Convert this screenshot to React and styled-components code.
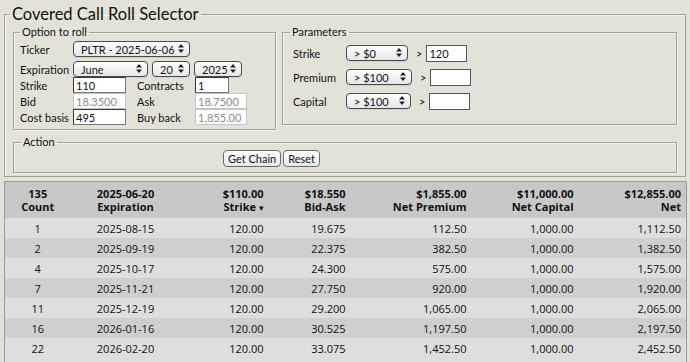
import { styled, createGlobalStyle } from "styled-components";

const GlobalStyle = createGlobalStyle`
  html, body {
    margin: 0;
    background: #e3e2d8;
  }
  body {
    font-family: Lato, "Open Sans", "Liberation Sans", sans-serif;
    color: #111;
  }
`;

const rows = [
  ["1", "2025-08-15", "120.00", "19.675", "112.50", "1,000.00", "1,112.50"],
  ["2", "2025-09-19", "120.00", "22.375", "382.50", "1,000.00", "1,382.50"],
  ["4", "2025-10-17", "120.00", "24.300", "575.00", "1,000.00", "1,575.00"],
  ["7", "2025-11-21", "120.00", "27.750", "920.00", "1,000.00", "1,920.00"],
  ["11", "2025-12-19", "120.00", "29.200", "1,065.00", "1,000.00", "2,065.00"],
  ["16", "2026-01-16", "120.00", "30.525", "1,197.50", "1,000.00", "2,197.50"],
  ["22", "2026-02-20", "120.00", "33.075", "1,452.50", "1,000.00", "2,452.50"],
];

const columns = [
  { top: "135", label: "Count", width: 66, align: "center" },
  { top: "2025-06-20", label: "Expiration", width: 110, align: "center" },
  { top: "$110.00", label: "Strike", width: 88, align: "right", sorted: true },
  { top: "$18.550", label: "Bid-Ask", width: 82, align: "right" },
  { top: "$1,855.00", label: "Net Premium", width: 121, align: "right" },
  { top: "$11,000.00", label: "Net Capital", width: 107, align: "right" },
  { top: "$12,855.00", label: "Net", width: 108, align: "right" },
];

const Arrows = () => (
  <svg width="6" height="9" viewBox="0 0 6 9">
    <path d="M3 0 L6 3.5 H0 Z M3 9 L6 5.5 H0 Z" fill="#222" />
  </svg>
);

const Select = ({ value, width }) => (
  <SelectWrap $width={width}>
    <SelectBox defaultValue={value}>
      <option>{value}</option>
    </SelectBox>
    <ArrowSlot>
      <Arrows />
    </ArrowSlot>
  </SelectWrap>
);

const App = () => {
  return (
    <Page>
      <GlobalStyle />
      <Outer>
        <OuterLegend>Covered Call Roll Selector</OuterLegend>
        <TopRow>
          <OptionSet>
            <Legend>Option to roll</Legend>
            <TickerRow>
              <Label>Ticker</Label>
              <Select value="PLTR - 2025-06-06" width={117} />
            </TickerRow>
            <FormRow>
              <Label>Expiration</Label>
              <Selects>
                <Select value="June" width={75} />
                <Select value="20" width={38} />
                <Select value="2025" width={48} />
              </Selects>
            </FormRow>
            <FormRow>
              <Label>Strike</Label>
              <Input defaultValue="110" $width={53} />
              <SubLabel>Contracts</SubLabel>
              <Input defaultValue="1" $width={34} />
            </FormRow>
            <FormRow>
              <Label>Bid</Label>
              <Input defaultValue="18.3500" $width={53} disabled />
              <SubLabel>Ask</SubLabel>
              <Input defaultValue="18.7500" $width={52} disabled />
            </FormRow>
            <FormRow>
              <Label>Cost basis</Label>
              <Input defaultValue="495" $width={53} />
              <SubLabel>Buy back</SubLabel>
              <Input defaultValue="1,855.00" $width={52} disabled />
            </FormRow>
          </OptionSet>
          <ParamSet>
            <Legend>Parameters</Legend>
            <ParamRow>
              <Label>Strike</Label>
              <Select value="> $0" width={62} />
              <Gt>&gt;</Gt>
              <ParamInput defaultValue="120" />
            </ParamRow>
            <ParamRow>
              <Label>Premium</Label>
              <Select value="> $100" width={66} />
              <Gt>&gt;</Gt>
              <ParamInput />
            </ParamRow>
            <ParamRow>
              <Label>Capital</Label>
              <Select value="> $100" width={65} />
              <Gt>&gt;</Gt>
              <ParamInput />
            </ParamRow>
          </ParamSet>
        </TopRow>
        <ActionSet>
          <Legend>Action</Legend>
          <Buttons>
            <Button>Get Chain</Button>
            <Button>Reset</Button>
          </Buttons>
        </ActionSet>
      </Outer>
      <Table>
        <colgroup>
          {columns.map((c) => (
            <col key={c.label} style={{ width: c.width }} />
          ))}
        </colgroup>
        <thead>
          <tr>
            {columns.map((c) => (
              <Th key={c.label} $align={c.align}>
                <HeadLine>{c.top}</HeadLine>
                <HeadLine>
                  {c.label}
                  {c.sorted && <Sort>▾</Sort>}
                </HeadLine>
              </Th>
            ))}
          </tr>
        </thead>
        <tbody>
          {rows.map((r, i) => (
            <Tr key={r[0]} $odd={i % 2 === 1}>
              {r.map((v, j) => (
                <Td key={j} $align={columns[j].align}>
                  {v}
                </Td>
              ))}
            </Tr>
          ))}
          <Tr>
            <Td colSpan={7} />
          </Tr>
        </tbody>
      </Table>
    </Page>
  );
};

const Page = styled.div`
  width: 690px;
  height: 362px;
  overflow: hidden;
  padding: 3px 4px 0;
  box-sizing: border-box;
`;

const Outer = styled.fieldset`
  margin: 0;
  padding: 0 8px 3px;
  border: 1px solid #a09f95;
  box-shadow: inset 1px 1px 0 #f3f2ea;
`;

const OuterLegend = styled.legend`
  font-size: 16.5px;
  line-height: 22px;
  padding: 0 2px;
  margin-left: -3px;
`;

const Legend = styled.legend`
  font-size: 11px;
  line-height: 14px;
  padding: 0 2px;
`;

const TopRow = styled.div`
  display: flex;
  align-items: flex-start;
  gap: 6px;
`;

const InnerSet = styled.fieldset`
  margin: 0;
  border: 1px solid #a3a298;
  box-shadow: inset 1px 1px 0 #f3f2ea, 1px 1px 0 #f3f2ea;
`;

const OptionSet = styled(InnerSet)`
  width: 263px;
  box-sizing: border-box;
  padding: 2px 6px 4px;
  display: flex;
  flex-direction: column;
`;

const ParamSet = styled(InnerSet)`
  flex: 1;
  padding: 5px 10px 14px 7px;
  display: flex;
  flex-direction: column;
  gap: 6px;
`;

const ActionSet = styled(InnerSet)`
  margin-top: 5px;
  padding: 1px 7px 5px;
`;

const FormRow = styled.div`
  display: flex;
  align-items: center;
  height: 16px;
  font-size: 11px;
`;

const TickerRow = styled(FormRow)`
  margin-bottom: 4px;
`;

const ParamRow = styled(FormRow)`
  height: 18px;
  padding-left: 3px;
`;

const Label = styled.span`
  width: 53px;
  flex: none;
  font-size: 11px;
`;

const SubLabel = styled.span`
  width: 58px;
  margin-left: 11px;
  font-size: 11px;
`;

const Selects = styled.div`
  display: flex;
  gap: 4px;
`;

const SelectWrap = styled.span`
  position: relative;
  display: inline-flex;
  width: ${(p) => p.$width}px;
  height: 16px;
`;

const SelectBox = styled.select`
  appearance: none;
  width: 100%;
  height: 100%;
  margin: 0;
  padding: 0 0 0 7px;
  font: 11px Lato, "Open Sans", sans-serif;
  color: #111;
  border: 1px solid #4a4a4a;
  border-radius: 4px;
  background: linear-gradient(#ffffff, #f0f0f0 60%, #e6e6e6);
  box-shadow: 0 1px 0 rgba(0, 0, 0, 0.08);
`;

const ArrowSlot = styled.span`
  position: absolute;
  right: 6px;
  top: 3px;
  display: flex;
  pointer-events: none;
`;

const Input = styled.input`
  width: ${(p) => p.$width}px;
  height: 16px;
  box-sizing: border-box;
  margin: 0;
  padding: 0 2px;
  font: 11px Lato, "Open Sans", sans-serif;
  color: #111;
  background: #fff;
  border: 1px solid #3a3a3a;
  border-right-color: #777;
  border-bottom-color: #777;

  &:disabled {
    color: #8a8a8a;
    border-color: #c4c4c4;
    background: #fff;
  }
`;

const ParamInput = styled(Input)`
  width: 41px;
  height: 17px;
  border-color: #555;
`;

const Gt = styled.span`
  font-size: 11px;
  margin: 0 4px 0 8px;
`;

const Buttons = styled.div`
  display: flex;
  gap: 2px;
  padding-left: 202px;
`;

const Button = styled.button`
  height: 17px;
  padding: 0 4px;
  font: 11px Lato, "Open Sans", sans-serif;
  color: #111;
  border: 1px solid #6a6a6a;
  border-radius: 4px;
  background: linear-gradient(#ffffff, #f2f2f2 60%, #e8e8e8);
  line-height: 15px;
`;

const Table = styled.table`
  margin-top: 4px;
  width: 682px;
  table-layout: fixed;
  border-collapse: collapse;
  border: 1px solid #9a9a9a;
  border-bottom: none;
  font-family: "Open Sans", "DejaVu Sans", sans-serif;
  font-size: 11px;
`;

const Th = styled.th`
  background: #c8c8c8;
  font-weight: bold;
  height: 36px;
  padding: 0 5px;
  text-align: ${(p) => p.$align};
  vertical-align: middle;
  white-space: nowrap;
`;

const HeadLine = styled.div`
  line-height: 13px;
`;

const Sort = styled.span`
  font-size: 9px;
  margin-left: 3px;
`;

const Tr = styled.tr`
  background: ${(p) => (p.$odd ? "#cfcfcf" : "#dedede")};
`;

const Td = styled.td`
  height: 20px;
  padding: 0 5px;
  text-align: ${(p) => p.$align};
  white-space: nowrap;
`;

export default App;
